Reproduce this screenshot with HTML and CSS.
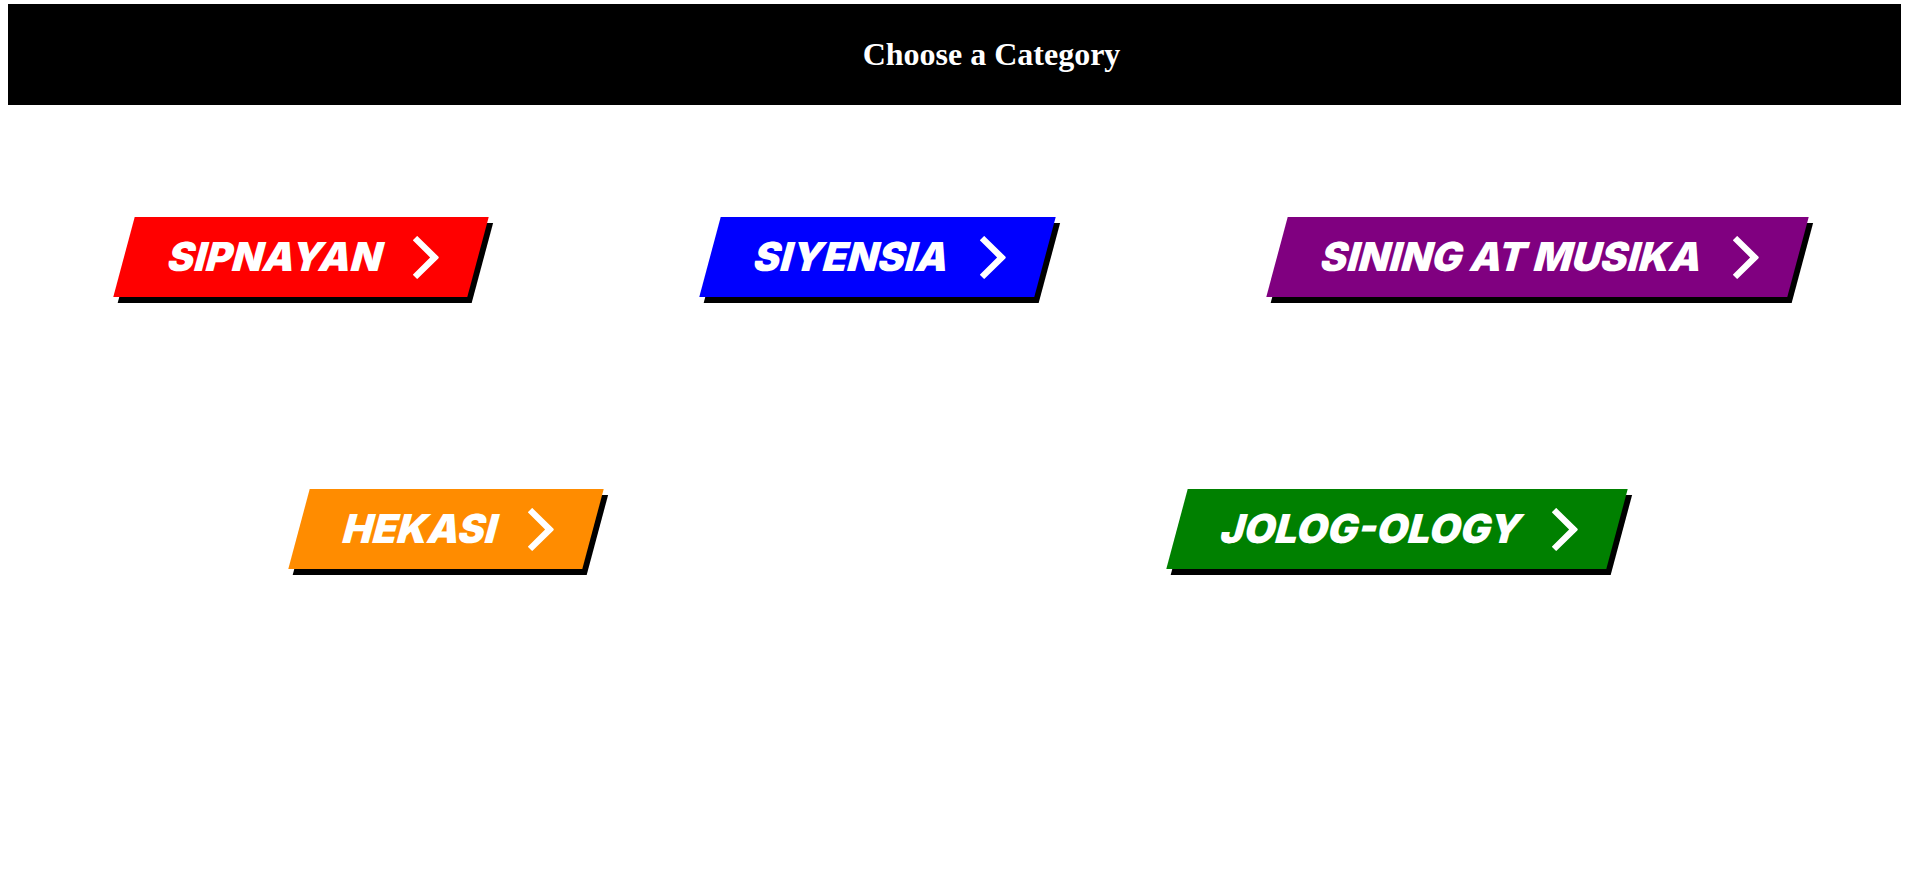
FILE: index.html
```html
<!DOCTYPE html>
<html lang="tl">
<head>
<meta charset="utf-8">
<title>Choose a Category</title>
<link rel="stylesheet" href="styles.css">
</head>
<body>
<header class="topbar">
  <h1 class="title">Choose a Category</h1>
</header>
<main class="menu">
  <div class="row row-top">
    <a class="cta cta-red" href="#"><span class="cta-label">SIPNAYAN</span><span class="cta-arrow"><svg width="26" height="43" viewBox="0 0 26 43"><path d="M0.15,3.89 L3.98,0.14 C4.17,-0.05 4.48,-0.05 4.68,0.14 L25.69,20.78 C26.09,21.17 26.09,21.81 25.7,22.2 L4.68,42.86 C4.48,43.05 4.17,43.05 3.98,42.86 L0.15,39.11 C-0.04,38.91 -0.05,38.6 0.15,38.39 L16.99,21.86 C17.19,21.66 17.19,21.35 17,21.15 L0.15,4.61 C-0.04,4.41 -0.05,4.1 0.15,3.9 Z"/></svg></span></a>
    <a class="cta cta-blue" href="#"><span class="cta-label">SIYENSIA</span><span class="cta-arrow"><svg width="26" height="43" viewBox="0 0 26 43"><path d="M0.15,3.89 L3.98,0.14 C4.17,-0.05 4.48,-0.05 4.68,0.14 L25.69,20.78 C26.09,21.17 26.09,21.81 25.7,22.2 L4.68,42.86 C4.48,43.05 4.17,43.05 3.98,42.86 L0.15,39.11 C-0.04,38.91 -0.05,38.6 0.15,38.39 L16.99,21.86 C17.19,21.66 17.19,21.35 17,21.15 L0.15,4.61 C-0.04,4.41 -0.05,4.1 0.15,3.9 Z"/></svg></span></a>
    <a class="cta cta-purple" href="#"><span class="cta-label">SINING AT MUSIKA</span><span class="cta-arrow"><svg width="26" height="43" viewBox="0 0 26 43"><path d="M0.15,3.89 L3.98,0.14 C4.17,-0.05 4.48,-0.05 4.68,0.14 L25.69,20.78 C26.09,21.17 26.09,21.81 25.7,22.2 L4.68,42.86 C4.48,43.05 4.17,43.05 3.98,42.86 L0.15,39.11 C-0.04,38.91 -0.05,38.6 0.15,38.39 L16.99,21.86 C17.19,21.66 17.19,21.35 17,21.15 L0.15,4.61 C-0.04,4.41 -0.05,4.1 0.15,3.9 Z"/></svg></span></a>
  </div>
  <div class="row row-bottom">
    <a class="cta cta-orange" href="#"><span class="cta-label">HEKASI</span><span class="cta-arrow"><svg width="26" height="43" viewBox="0 0 26 43"><path d="M0.15,3.89 L3.98,0.14 C4.17,-0.05 4.48,-0.05 4.68,0.14 L25.69,20.78 C26.09,21.17 26.09,21.81 25.7,22.2 L4.68,42.86 C4.48,43.05 4.17,43.05 3.98,42.86 L0.15,39.11 C-0.04,38.91 -0.05,38.6 0.15,38.39 L16.99,21.86 C17.19,21.66 17.19,21.35 17,21.15 L0.15,4.61 C-0.04,4.41 -0.05,4.1 0.15,3.9 Z"/></svg></span></a>
    <a class="cta cta-green" href="#"><span class="cta-label">JOLOG-OLOGY</span><span class="cta-arrow"><svg width="26" height="43" viewBox="0 0 26 43"><path d="M0.15,3.89 L3.98,0.14 C4.17,-0.05 4.48,-0.05 4.68,0.14 L25.69,20.78 C26.09,21.17 26.09,21.81 25.7,22.2 L4.68,42.86 C4.48,43.05 4.17,43.05 3.98,42.86 L0.15,39.11 C-0.04,38.91 -0.05,38.6 0.15,38.39 L16.99,21.86 C17.19,21.66 17.19,21.35 17,21.15 L0.15,4.61 C-0.04,4.41 -0.05,4.1 0.15,3.9 Z"/></svg></span></a>
  </div>
</main>
</body>
</html>
```

FILE: styles.css
```css
html, body {
  background: #ffffff;
}

body {
  margin: 0;
  padding: 4px 8px 8px 8px;
}

.topbar {
  display: flex;
  align-items: center;
  justify-content: center;
  height: 101px;
  padding-left: 74px;
  background: #000000;
}

.title {
  margin: 0;
  font-family: "Liberation Serif", "Times New Roman", serif;
  font-weight: bold;
  font-size: 32px;
  color: #ffffff;
}

.menu {
  display: flex;
  flex-direction: column;
}

.row {
  display: flex;
  align-items: flex-start;
}

.row-top {
  margin-top: 112px;
  padding-left: 116px;
  column-gap: 232px;
}

.row-bottom {
  margin-top: 192px;
  padding-left: 291px;
  column-gap: 584px;
}

.cta {
  display: flex;
  align-items: center;
  padding: 10px 45px;
  text-decoration: none;
  font-family: Inter, "Liberation Sans", sans-serif;
  font-weight: 900;
  font-size: 40px;
  line-height: 60px;
  color: #ffffff;
  box-shadow: 6px 6px 0 #000000;
  transform: skewX(-15deg);
}

.cta-red { background: #ff0000; }
.cta-blue { background: #0000ff; }
.cta-purple { background: #800080; }
.cta-orange { background: #ff8c00; }
.cta-green { background: #008000; }

.cta-label {
  white-space: nowrap;
}

.cta-arrow {
  display: flex;
  width: 20px;
  margin-left: 30px;
  overflow: visible;
  transform: skewX(15deg);
}

.cta-arrow svg {
  flex: none;
  fill: #ffffff;
}
```
